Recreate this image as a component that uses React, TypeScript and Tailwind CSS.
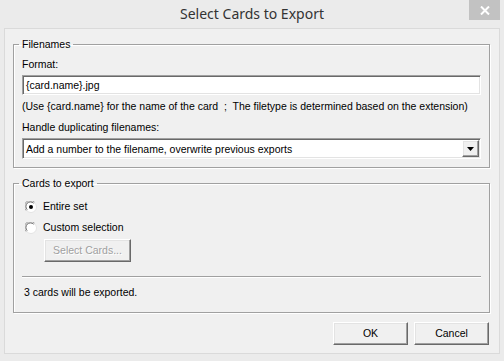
import React from 'react';

const sunken =
  'border-t border-l border-[#a0a0a0] border-r border-b border-r-white border-b-white shadow-[inset_1px_1px_0_#696969,inset_-1px_-1px_0_#e3e3e3]';
const raised =
  'border-t border-l border-white border-r border-b border-r-[#696969] border-b-[#696969] shadow-[inset_-1px_-1px_0_#a0a0a0,inset_1px_1px_0_#e3e3e3]';

const Radio = ({ checked }: { checked?: boolean }) => (
  <svg width="12" height="12" viewBox="0 0 12 12" className="shrink-0">
    <circle cx="6" cy="6" r="5.5" fill="white" stroke="#e3e3e3" />
    <path d="M1.1 9.5 A5.5 5.5 0 0 1 9.5 1.1" fill="none" stroke="#a0a0a0" />
    <path d="M2.2 8.6 A4.5 4.5 0 0 1 8.6 2.2" fill="none" stroke="#696969" />
    {checked && <circle cx="6" cy="6" r="2" fill="black" />}
  </svg>
);

export default function App() {
  return (
    <div
      className="w-[504px] h-[361px] bg-[#ebebeb] flex flex-col text-[10.5px] leading-[13px] text-black whitespace-nowrap"
      style={{ fontFamily: '"Liberation Sans", Arial, sans-serif' }}
    >
      {/* title bar */}
      <div className="relative h-[28px] shrink-0 flex items-center justify-center pb-[1px]">
        <span
          className="text-[14px] leading-[20px] text-[#333333]"
          style={{ fontFamily: '"Noto Sans", "Open Sans", sans-serif' }}
        >
          Select Cards to Export
        </span>
        <div className="absolute right-[4px] top-0 w-[31px] h-[20px] bg-[#c2c2c2] flex items-center justify-center">
          <svg width="10" height="9" viewBox="0 0 10 9">
            <path d="M1 0.5 L9 8.5 M9 0.5 L1 8.5" stroke="white" strokeWidth="2" />
          </svg>
        </div>
      </div>

      {/* client area */}
      <div className="mx-[4px] h-[326px] border border-[#dadada] bg-[#f0f0f0] pl-[8px] flex flex-col">
        <fieldset className="mt-[9px] w-[477px] border border-[#a0a0a0] px-[8px] pt-[7px] pb-[8px] shadow-[1px_1px_0_white,inset_1px_1px_0_white]">
          <legend className="-ml-[3px] px-[3px]">Filenames</legend>
          <div>Format:</div>
          <div className={`mt-[4px] h-[20px] bg-white pl-[3px] flex items-center ${sunken}`}>
            {'{card.name}.jpg'}
          </div>
          <div className="mt-[5px]">
            (Use {'{card.name}'} for the name of the card&nbsp; ;&nbsp; The filetype is determined based on the extension)
          </div>
          <div className="mt-[8px]">Handle duplicating filenames:</div>
          <div className={`mt-[4px] h-[21px] bg-white flex items-stretch ${sunken}`}>
            <div className="flex-1 flex items-center pl-[3px] pt-[1px]">
              Add a number to the filename, overwrite previous exports
            </div>
            <div className={`w-[17px] my-[1px] mr-[1px] bg-[#f0f0f0] flex items-center justify-center ${raised}`}>
              <svg width="7" height="4" viewBox="0 0 7 4">
                <path d="M0 0 H7 L3.5 4 Z" fill="black" />
              </svg>
            </div>
          </div>
        </fieldset>

        <fieldset className="mt-[9px] w-[477px] border border-[#a0a0a0] px-[8px] pt-[8px] pb-[13px] shadow-[1px_1px_0_white,inset_1px_1px_0_white]">
          <legend className="-ml-[3px] px-[3px]">Cards to export</legend>
          <div className="flex flex-col gap-[4px]">
            <label className="h-[17px] flex items-center gap-[6px] pl-[3px]">
              <Radio checked />
              <span>Entire set</span>
            </label>
            <label className="h-[17px] flex items-center gap-[6px] pl-[3px]">
              <Radio />
              <span>Custom selection</span>
            </label>
          </div>
          <button
            disabled
            className={`mt-[3px] ml-[22px] w-[87px] h-[23px] bg-[#f0f0f0] text-[#a0a0a0] [text-shadow:1px_1px_0_white] ${raised}`}
          >
            Select Cards...
          </button>
          <div className="mt-[14px] h-[2px] border-t border-[#a0a0a0] border-b border-b-white" />
          <div className="mt-[8px] ml-[2px]">3 cards will be exported.</div>
        </fieldset>

        <div className="mt-[9px] w-[476px] flex justify-end gap-[6px]">
          <button className={`w-[75px] h-[23px] bg-[#f0f0f0] ${raised}`}>OK</button>
          <button className={`w-[75px] h-[23px] bg-[#f0f0f0] ${raised}`}>Cancel</button>
        </div>
      </div>
    </div>
  );
}
